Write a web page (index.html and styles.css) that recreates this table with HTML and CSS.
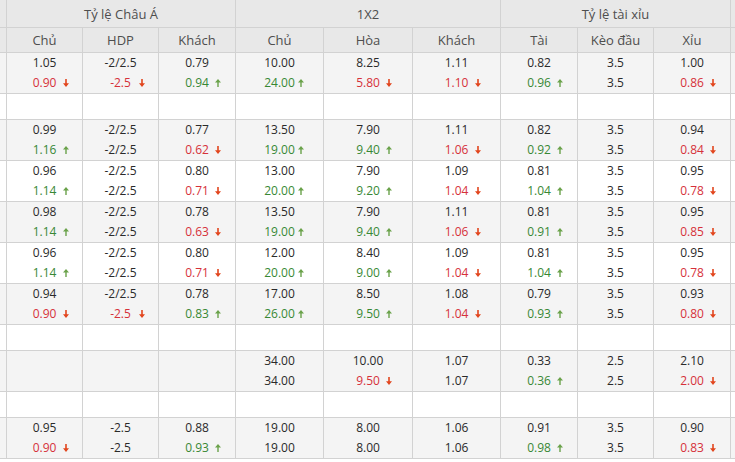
FILE: index.html
```html
<!DOCTYPE html>
<html lang="vi">
<head>
<meta charset="utf-8">
<title>Tỷ lệ kèo</title>
<link rel="stylesheet" href="styles.css">
</head>
<body>
<svg class="defs" aria-hidden="true">
  <symbol id="dn" viewBox="0 0 6 8"><path d="M2.2 0h1.6v4.2H6L3 8 0 4.2h2.2z"/></symbol>
  <symbol id="up" viewBox="0 0 6 8"><path d="M3 0l3 3.6H3.7V8H2.3V3.6H0z"/></symbol>
</svg>
<div class="board">
  <div class="row head">
    <div class="c"></div>
    <div class="c span3">Tỷ lệ Châu Á</div>
    <div class="c span3">1X2</div>
    <div class="c span3">Tỷ lệ tài xỉu</div>
    <div class="c"></div>
  </div>
  <div class="row head">
    <div class="c"></div>
    <div class="c">Chủ</div><div class="c">HDP</div><div class="c">Khách</div>
    <div class="c">Chủ</div><div class="c">Hòa</div><div class="c">Khách</div>
    <div class="c">Tài</div><div class="c">Kèo đầu</div><div class="c">Xỉu</div>
    <div class="c"></div>
  </div>

  <div class="row alt data">
    <div class="c"></div>
    <div class="c"><div class="v">1.05</div><div class="v red">0.90<svg class="ar dnc"><use href="#dn"/></svg></div></div>
    <div class="c"><div class="v">-2/2.5</div><div class="v red">-2.5<svg class="ar dnc"><use href="#dn"/></svg></div></div>
    <div class="c"><div class="v">0.79</div><div class="v green">0.94<svg class="ar upc"><use href="#up"/></svg></div></div>
    <div class="c"><div class="v">10.00</div><div class="v green">24.00<svg class="ar upc"><use href="#up"/></svg></div></div>
    <div class="c"><div class="v">8.25</div><div class="v red">5.80<svg class="ar dnc"><use href="#dn"/></svg></div></div>
    <div class="c"><div class="v">1.11</div><div class="v red">1.10<svg class="ar dnc"><use href="#dn"/></svg></div></div>
    <div class="c"><div class="v">0.82</div><div class="v green">0.96<svg class="ar upc"><use href="#up"/></svg></div></div>
    <div class="c"><div class="v">3.5</div><div class="v">3.5</div></div>
    <div class="c"><div class="v">1.00</div><div class="v red">0.86<svg class="ar dnc"><use href="#dn"/></svg></div></div>
    <div class="c"></div>
  </div>

  <div class="row empty">
    <div class="c"></div><div class="c"></div><div class="c"></div><div class="c"></div><div class="c"></div><div class="c"></div><div class="c"></div><div class="c"></div><div class="c"></div><div class="c"></div><div class="c"></div>
  </div>

  <div class="row alt data">
    <div class="c"></div>
    <div class="c"><div class="v">0.99</div><div class="v green">1.16<svg class="ar upc"><use href="#up"/></svg></div></div>
    <div class="c"><div class="v">-2/2.5</div><div class="v">-2/2.5</div></div>
    <div class="c"><div class="v">0.77</div><div class="v red">0.62<svg class="ar dnc"><use href="#dn"/></svg></div></div>
    <div class="c"><div class="v">13.50</div><div class="v green">19.00<svg class="ar upc"><use href="#up"/></svg></div></div>
    <div class="c"><div class="v">7.90</div><div class="v green">9.40<svg class="ar upc"><use href="#up"/></svg></div></div>
    <div class="c"><div class="v">1.11</div><div class="v red">1.06<svg class="ar dnc"><use href="#dn"/></svg></div></div>
    <div class="c"><div class="v">0.82</div><div class="v green">0.92<svg class="ar upc"><use href="#up"/></svg></div></div>
    <div class="c"><div class="v">3.5</div><div class="v">3.5</div></div>
    <div class="c"><div class="v">0.94</div><div class="v red">0.84<svg class="ar dnc"><use href="#dn"/></svg></div></div>
    <div class="c"></div>
  </div>

  <div class="row data">
    <div class="c"></div>
    <div class="c"><div class="v">0.96</div><div class="v green">1.14<svg class="ar upc"><use href="#up"/></svg></div></div>
    <div class="c"><div class="v">-2/2.5</div><div class="v">-2/2.5</div></div>
    <div class="c"><div class="v">0.80</div><div class="v red">0.71<svg class="ar dnc"><use href="#dn"/></svg></div></div>
    <div class="c"><div class="v">13.00</div><div class="v green">20.00<svg class="ar upc"><use href="#up"/></svg></div></div>
    <div class="c"><div class="v">7.90</div><div class="v green">9.20<svg class="ar upc"><use href="#up"/></svg></div></div>
    <div class="c"><div class="v">1.09</div><div class="v red">1.04<svg class="ar dnc"><use href="#dn"/></svg></div></div>
    <div class="c"><div class="v">0.81</div><div class="v green">1.04<svg class="ar upc"><use href="#up"/></svg></div></div>
    <div class="c"><div class="v">3.5</div><div class="v">3.5</div></div>
    <div class="c"><div class="v">0.95</div><div class="v red">0.78<svg class="ar dnc"><use href="#dn"/></svg></div></div>
    <div class="c"></div>
  </div>

  <div class="row alt data">
    <div class="c"></div>
    <div class="c"><div class="v">0.98</div><div class="v green">1.14<svg class="ar upc"><use href="#up"/></svg></div></div>
    <div class="c"><div class="v">-2/2.5</div><div class="v">-2/2.5</div></div>
    <div class="c"><div class="v">0.78</div><div class="v red">0.63<svg class="ar dnc"><use href="#dn"/></svg></div></div>
    <div class="c"><div class="v">13.50</div><div class="v green">19.00<svg class="ar upc"><use href="#up"/></svg></div></div>
    <div class="c"><div class="v">7.90</div><div class="v green">9.40<svg class="ar upc"><use href="#up"/></svg></div></div>
    <div class="c"><div class="v">1.11</div><div class="v red">1.06<svg class="ar dnc"><use href="#dn"/></svg></div></div>
    <div class="c"><div class="v">0.81</div><div class="v green">0.91<svg class="ar upc"><use href="#up"/></svg></div></div>
    <div class="c"><div class="v">3.5</div><div class="v">3.5</div></div>
    <div class="c"><div class="v">0.95</div><div class="v red">0.85<svg class="ar dnc"><use href="#dn"/></svg></div></div>
    <div class="c"></div>
  </div>

  <div class="row data">
    <div class="c"></div>
    <div class="c"><div class="v">0.96</div><div class="v green">1.14<svg class="ar upc"><use href="#up"/></svg></div></div>
    <div class="c"><div class="v">-2/2.5</div><div class="v">-2/2.5</div></div>
    <div class="c"><div class="v">0.80</div><div class="v red">0.71<svg class="ar dnc"><use href="#dn"/></svg></div></div>
    <div class="c"><div class="v">12.00</div><div class="v green">20.00<svg class="ar upc"><use href="#up"/></svg></div></div>
    <div class="c"><div class="v">8.40</div><div class="v green">9.00<svg class="ar upc"><use href="#up"/></svg></div></div>
    <div class="c"><div class="v">1.09</div><div class="v red">1.04<svg class="ar dnc"><use href="#dn"/></svg></div></div>
    <div class="c"><div class="v">0.81</div><div class="v green">1.04<svg class="ar upc"><use href="#up"/></svg></div></div>
    <div class="c"><div class="v">3.5</div><div class="v">3.5</div></div>
    <div class="c"><div class="v">0.95</div><div class="v red">0.78<svg class="ar dnc"><use href="#dn"/></svg></div></div>
    <div class="c"></div>
  </div>

  <div class="row alt data">
    <div class="c"></div>
    <div class="c"><div class="v">0.94</div><div class="v red">0.90<svg class="ar dnc"><use href="#dn"/></svg></div></div>
    <div class="c"><div class="v">-2/2.5</div><div class="v red">-2.5<svg class="ar dnc"><use href="#dn"/></svg></div></div>
    <div class="c"><div class="v">0.78</div><div class="v green">0.83<svg class="ar upc"><use href="#up"/></svg></div></div>
    <div class="c"><div class="v">17.00</div><div class="v green">26.00<svg class="ar upc"><use href="#up"/></svg></div></div>
    <div class="c"><div class="v">8.50</div><div class="v green">9.50<svg class="ar upc"><use href="#up"/></svg></div></div>
    <div class="c"><div class="v">1.08</div><div class="v red">1.04<svg class="ar dnc"><use href="#dn"/></svg></div></div>
    <div class="c"><div class="v">0.79</div><div class="v green">0.93<svg class="ar upc"><use href="#up"/></svg></div></div>
    <div class="c"><div class="v">3.5</div><div class="v">3.5</div></div>
    <div class="c"><div class="v">0.93</div><div class="v red">0.80<svg class="ar dnc"><use href="#dn"/></svg></div></div>
    <div class="c"></div>
  </div>

  <div class="row empty">
    <div class="c"></div><div class="c"></div><div class="c"></div><div class="c"></div><div class="c"></div><div class="c"></div><div class="c"></div><div class="c"></div><div class="c"></div><div class="c"></div><div class="c"></div>
  </div>

  <div class="row alt data">
    <div class="c"></div>
    <div class="c"></div>
    <div class="c"></div>
    <div class="c"></div>
    <div class="c"><div class="v">34.00</div><div class="v">34.00</div></div>
    <div class="c"><div class="v">10.00</div><div class="v red">9.50<svg class="ar dnc"><use href="#dn"/></svg></div></div>
    <div class="c"><div class="v">1.07</div><div class="v">1.07</div></div>
    <div class="c"><div class="v">0.33</div><div class="v green">0.36<svg class="ar upc"><use href="#up"/></svg></div></div>
    <div class="c"><div class="v">2.5</div><div class="v">2.5</div></div>
    <div class="c"><div class="v">2.10</div><div class="v red">2.00<svg class="ar dnc"><use href="#dn"/></svg></div></div>
    <div class="c"></div>
  </div>

  <div class="row empty">
    <div class="c"></div><div class="c"></div><div class="c"></div><div class="c"></div><div class="c"></div><div class="c"></div><div class="c"></div><div class="c"></div><div class="c"></div><div class="c"></div><div class="c"></div>
  </div>

  <div class="row alt data">
    <div class="c"></div>
    <div class="c"><div class="v">0.95</div><div class="v red">0.90<svg class="ar dnc"><use href="#dn"/></svg></div></div>
    <div class="c"><div class="v">-2.5</div><div class="v">-2.5</div></div>
    <div class="c"><div class="v">0.88</div><div class="v green">0.93<svg class="ar upc"><use href="#up"/></svg></div></div>
    <div class="c"><div class="v">19.00</div><div class="v">19.00</div></div>
    <div class="c"><div class="v">8.00</div><div class="v">8.00</div></div>
    <div class="c"><div class="v">1.06</div><div class="v">1.06</div></div>
    <div class="c"><div class="v">0.91</div><div class="v green">0.98<svg class="ar upc"><use href="#up"/></svg></div></div>
    <div class="c"><div class="v">3.5</div><div class="v">3.5</div></div>
    <div class="c"><div class="v">0.90</div><div class="v red">0.83<svg class="ar dnc"><use href="#dn"/></svg></div></div>
    <div class="c"></div>
  </div>
</div>
</body>
</html>
```

FILE: styles.css
```css
html, body {
  margin: 0;
  padding: 0;
  background: #ffffff;
  overflow: hidden;
}

body {
  font-family: Tahoma, "Open Sans", "DejaVu Sans", sans-serif;
  font-size: 12px;
  color: #2a2a2a;
}

.defs {
  width: 0;
  height: 0;
  position: absolute;
  overflow: hidden;
}

.board {
  display: grid;
  grid-template-columns: 6px 75px 75px 76px 87px 88px 87px 76px 75px 76px 40px;
  gap: 1px;
  width: max-content;
  background: #d2d2d2;
  border-bottom: 1px solid #d2d2d2;
}

.row {
  display: contents;
}

.c {
  background: #ffffff;
  display: flex;
  flex-direction: column;
  justify-content: center;
  text-align: center;
  min-width: 0;
}

.head .c {
  background: #e8e8e8;
  color: #4e4e4e;
  font-size: 13px;
  height: 24px;
  align-items: center;
  justify-content: center;
}

.head:first-child .c {
  height: 27px;
}

.span3 {
  grid-column: span 3;
}

.data .c {
  height: 40px;
}

.empty .c {
  height: 25px;
}

.alt .c {
  background: #f4f4f4;
}

.v {
  position: relative;
  line-height: 20px;
  height: 20px;
  white-space: nowrap;
}

.red {
  color: #d6313a;
}

.green {
  color: #388834;
}

.ar {
  position: absolute;
  left: calc(50% + 18px);
  top: 6px;
  width: 6px;
  height: 8px;
}

.dnc {
  fill: #e2461e;
}

.upc {
  fill: #6aa24a;
}
```
